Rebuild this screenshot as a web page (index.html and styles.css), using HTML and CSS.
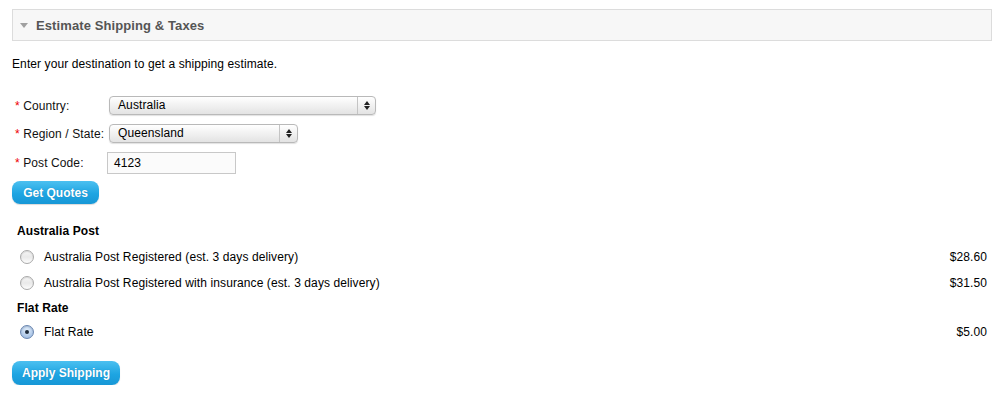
FILE: index.html
```html
<!DOCTYPE html>
<html>
<head>
<meta charset="utf-8">
<link rel="stylesheet" href="styles.css">
</head>
<body>
<div class="page">
  <div class="panel-head">
    <span class="caret"></span>
    <span class="panel-title">Estimate Shipping &amp; Taxes</span>
  </div>
  <p class="intro">Enter your destination to get a shipping estimate.</p>

  <div class="form">
    <div class="row row-select">
      <label class="lbl"><span class="req">*</span> Country:</label>
      <div class="select select-wide">
        <span class="select-val">Australia</span>
        <span class="select-arrows"><span class="up"></span><span class="down"></span></span>
      </div>
    </div>
    <div class="row row-select">
      <label class="lbl"><span class="req">*</span> Region / State:</label>
      <div class="select select-mid">
        <span class="select-val">Queensland</span>
        <span class="select-arrows"><span class="up"></span><span class="down"></span></span>
      </div>
    </div>
    <div class="row row-input">
      <label class="lbl"><span class="req">*</span> Post Code:</label>
      <div class="text-input">4123</div>
    </div>
    <button class="btn btn-quotes">Get Quotes</button>
  </div>

  <div class="results">
    <div class="group-title first">Australia Post</div>
    <div class="option">
      <span class="radio"></span>
      <span class="opt-label">Australia Post Registered (est. 3 days delivery)</span>
      <span class="price">$28.60</span>
    </div>
    <div class="option">
      <span class="radio"></span>
      <span class="opt-label">Australia Post Registered with insurance (est. 3 days delivery)</span>
      <span class="price">$31.50</span>
    </div>
    <div class="group-title second">Flat Rate</div>
    <div class="option third">
      <span class="radio checked"><span class="dot"></span></span>
      <span class="opt-label">Flat Rate</span>
      <span class="price">$5.00</span>
    </div>
  </div>

  <button class="btn btn-apply">Apply Shipping</button>
</div>
</body>
</html>
```

FILE: styles.css
```css
html, body {
  margin: 0;
  padding: 0;
  background: #fff;
}
body {
  font-family: "Liberation Sans", Arial, Helvetica, sans-serif;
  font-size: 12px;
  letter-spacing: 0.1px;
  color: #000;
}
.page {
  padding: 9px 12px 0 12px;
}
.panel-head {
  height: 30px;
  border: 1px solid #dcdcdc;
  background: #f7f7f7;
  display: flex;
  align-items: center;
  padding-left: 7px;
}
.caret {
  width: 0;
  height: 0;
  border-left: 4px solid transparent;
  border-right: 4px solid transparent;
  border-top: 5px solid #a0a0a0;
  margin-top: 1px;
  margin-right: 8px;
}
.panel-title {
  font-weight: bold;
  font-size: 13px;
  color: #555;
}
.intro {
  margin: 16px 0 0 0;
  line-height: 15px;
}
.form {
  margin-top: 24px;
}
.row {
  display: flex;
  align-items: center;
}
.row-select {
  height: 19px;
  margin-bottom: 9px;
}
.row-input {
  height: 22px;
  margin-bottom: 7px;
}
.lbl {
  width: 92px;
  padding-left: 3px;
  color: #111;
}
.req {
  color: #e00;
}
.select {
  height: 17px;
  margin-left: 2px;
  border: 1px solid #b9b9b9;
  border-radius: 4px;
  background: linear-gradient(#ffffff, #f1f1f1 50%, #e3e3e3);
  box-shadow: 0 1px 1px rgba(0,0,0,0.12);
  display: flex;
  align-items: stretch;
}
.select-wide { width: 265px; }
.select-mid { width: 187px; }
.select-val {
  flex: 1;
  padding-left: 8px;
  line-height: 17px;
}
.select-arrows {
  width: 17px;
  border-left: 1px solid #c4c4c4;
  display: flex;
  flex-direction: column;
  align-items: center;
  justify-content: center;
  gap: 1px;
}
.up, .down {
  width: 0;
  height: 0;
  border-left: 3px solid transparent;
  border-right: 3px solid transparent;
}
.up { border-bottom: 4px solid #222; }
.down { border-top: 4px solid #222; }
.text-input {
  width: 121px;
  height: 20px;
  border: 1px solid #c8c8c8;
  background: #fbfbfb;
  padding-left: 6px;
  line-height: 20px;
  font-size: 12px;
}
.btn {
  display: block;
  border: 0;
  border-radius: 8px;
  background: linear-gradient(#4cc0f0, #1ea5e2 55%, #1797d6);
  color: #fff;
  font-family: "Liberation Sans", Arial, Helvetica, sans-serif;
  font-weight: bold;
  font-size: 12px;
  text-shadow: 0 0 1px rgba(0,60,110,0.35);
  box-shadow: 0 1px 1px rgba(0,0,0,0.15);
  padding: 0;
  cursor: pointer;
}
.btn-quotes {
  width: 87px;
  height: 23px;
}
.btn-apply {
  width: 108px;
  height: 24px;
  margin-top: 16px;
}
.results {
  padding: 0 5px;
}
.group-title {
  font-weight: bold;
  height: 20px;
  line-height: 20px;
}
.group-title.first { margin-top: 17px; }
.group-title.second { margin-top: 2px; }
.option {
  height: 26px;
  display: flex;
  align-items: center;
}
.option:nth-of-type(2) { margin-top: 3px; }
.option.third { margin-top: 1px; }
.radio {
  width: 12px;
  height: 12px;
  margin-left: 3px;
  margin-right: 10px;
  border: 1px solid #a9a9a9;
  border-radius: 50%;
  background: linear-gradient(#f7f7f7, #e9e9e9 50%, #fdfdfd);
  box-shadow: inset 0 1px 1px rgba(0,0,0,0.12);
  display: flex;
  align-items: center;
  justify-content: center;
  flex: none;
}
.radio.checked {
  border-color: #6a86b0;
  background: radial-gradient(circle at 50% 35%, #e4effb, #a9c4e6 70%, #8eb0dd);
}
.dot {
  width: 4px;
  height: 4px;
  border-radius: 50%;
  background: #1d2a3a;
}
.opt-label {
  flex: 1;
}
.price {
  text-align: right;
}
```
